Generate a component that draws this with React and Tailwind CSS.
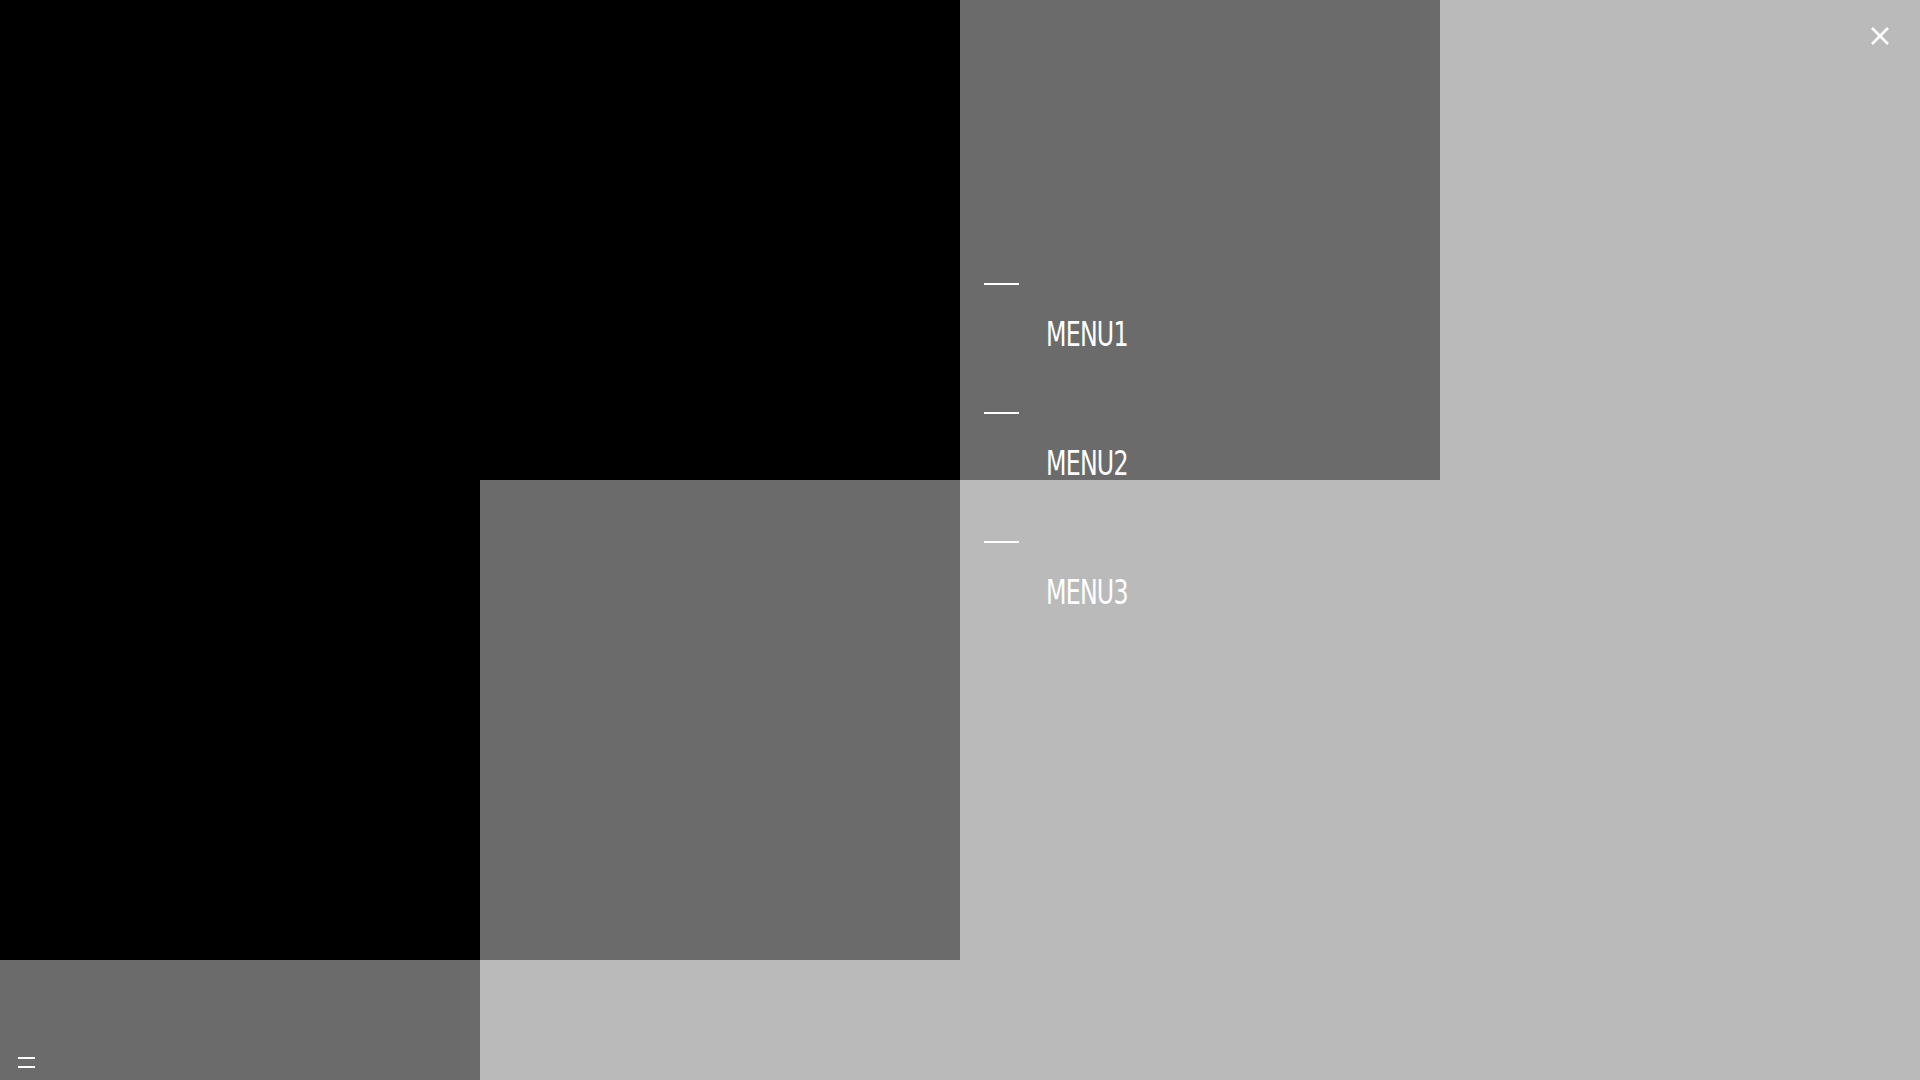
import { useState } from "react";

const tiles = [
    "bg-black", "bg-black", "bg-[#6b6b6b]", "bg-[#bababa]",
    "bg-black", "bg-[#6b6b6b]", "bg-[#bababa]", "bg-[#bababa]",
    "bg-[#6b6b6b]", "bg-[#bababa]", "bg-[#bababa]", "bg-[#bababa]",
];

const items = ["MENU1", "MENU2", "MENU3"];

export default function App() {
    const [open, setOpen] = useState(true);

    return (
        <div className="relative h-screen w-full overflow-hidden font-['DejaVu_Sans_Condensed','Liberation_Sans',sans-serif]">
            {/* background tiles */}
            <div className="grid grid-cols-4 auto-rows-[480px]">
                {tiles.map((c, i) => (
                    <div key={i} className={c} />
                ))}
            </div>

            {/* menu overlay */}
            {open && (
                <nav className="absolute left-[984px] top-[283px] flex flex-col gap-[60px]">
                    {items.map((m) => (
                        <a key={m} href="#" className="flex flex-col items-start">
                            <span className="block h-[2px] w-[35px] bg-white" />
                            <span className="mt-[33px] ml-[62px] inline-block origin-left scale-x-[0.8] text-[33px] leading-[34px] tracking-[-1px] text-white">
                                {m}
                            </span>
                        </a>
                    ))}
                </nav>
            )}

            <button
                onClick={() => setOpen(!open)}
                className="absolute right-[30px] top-[26px] h-[20px] w-[20px]"
            >
                <svg viewBox="0 0 20 20" width="20" height="20">
                    <path d="M2 2L18 18M18 2L2 18" stroke="white" strokeWidth="2.6" />
                </svg>
            </button>

            <button className="absolute left-[18px] bottom-[12px] flex flex-col gap-[7px]">
                <span className="block h-[2px] w-[17px] bg-white" />
                <span className="block h-[2px] w-[17px] bg-white" />
            </button>
        </div>
    );
}
